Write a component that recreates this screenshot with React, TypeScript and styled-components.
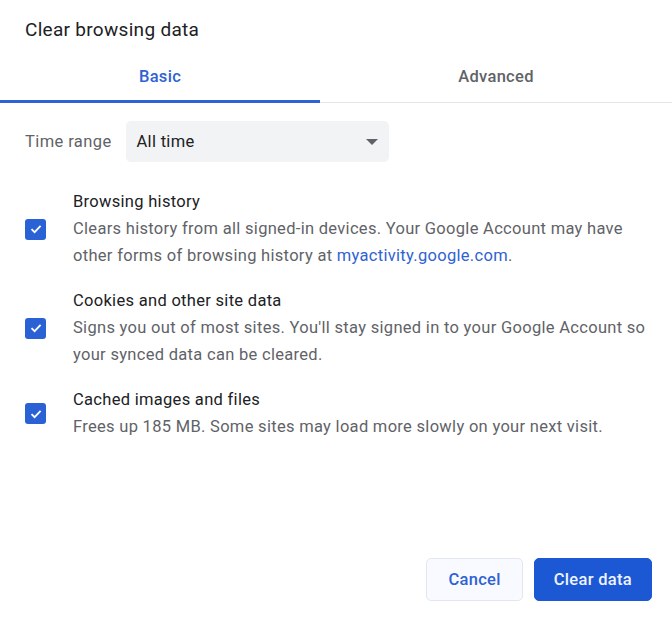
import React from 'react';
import styled, { createGlobalStyle } from 'styled-components';

const GlobalStyle = createGlobalStyle`
  html, body {
    margin: 0;
    padding: 0;
    background: #ffffff;
  }
  body {
    font-family: Roboto, "Liberation Sans", Arial, sans-serif;
    color: #202124;
  }
`;

const Dialog = styled.div`
  width: 672px;
  height: 624px;
  display: flex;
  flex-direction: column;
  background: #ffffff;
  box-sizing: border-box;
`;

const Title = styled.h1`
  margin: 0;
  padding: 17px 25px 0;
  font-size: 19px;
  font-weight: 400;
  letter-spacing: 0.3px;
  line-height: 26px;
  color: #202124;
`;

const TabBar = styled.div`
  display: flex;
  margin-top: 17px;
  border-bottom: 1px solid #e3e5e8;
`;

const Tab = styled.div<{ $active?: boolean }>`
  flex: ${p => (p.$active ? '0 0 320px' : '1')};
  height: 43px;
  display: flex;
  align-items: flex-start;
  justify-content: center;
  padding-top: 7px;
  box-sizing: border-box;
  font-size: 16.5px;
  letter-spacing: 0.3px;
  font-weight: 500;
  color: ${p => (p.$active ? '#2f62d2' : '#5f6368')};
  border-bottom: 3px solid ${p => (p.$active ? '#2f62d2' : 'transparent')};
  margin-bottom: -1px;
`;

const Body = styled.div`
  flex: 1;
  padding: 18px 25px 0;
`;

const RangeRow = styled.div`
  display: flex;
  align-items: center;
  gap: 14px;
`;

const RangeLabel = styled.span`
  font-size: 16.5px;
  letter-spacing: 0.4px;
  color: #5f6368;
`;

const Select = styled.div`
  width: 263px;
  height: 41px;
  box-sizing: border-box;
  padding: 0 11px 0 11px;
  display: flex;
  align-items: center;
  justify-content: space-between;
  background: #f1f3f4;
  border-radius: 5px;
  font-size: 16.5px;
  letter-spacing: 0.3px;
  color: #202124;
`;

const Caret = styled.span`
  width: 0;
  height: 0;
  border-left: 6px solid transparent;
  border-right: 6px solid transparent;
  border-top: 6px solid #5f6368;
`;

const Options = styled.div`
  margin-top: 27px;
  display: flex;
  flex-direction: column;
  gap: 19px;
`;

const Option = styled.div`
  display: flex;
  align-items: center;
`;

const Box = styled.div`
  flex: 0 0 auto;
  width: 21px;
  height: 21px;
  border-radius: 3px;
  background: #2a62d6;
  display: flex;
  align-items: center;
  justify-content: center;
  margin-right: 27px;
`;

const OptionText = styled.div`
  display: flex;
  flex-direction: column;
`;

const OptionTitle = styled.div`
  font-size: 16.5px;
  letter-spacing: 0.3px;
  line-height: 26px;
  color: #202124;
`;

const OptionDesc = styled.div`
  font-size: 16.5px;
  letter-spacing: 0.3px;
  line-height: 27px;
  color: #5f6368;
  max-width: 585px;
`;

const Link = styled.a`
  color: #2f62d2;
  text-decoration: none;
`;

const Footer = styled.div`
  display: flex;
  justify-content: flex-end;
  gap: 11px;
  padding: 0 20px 23px;
`;

const Button = styled.button<{ $primary?: boolean }>`
  height: 43px;
  padding: 0 ${p => (p.$primary ? '19px' : '21px')};
  border-radius: 5px;
  font-family: Roboto, "Liberation Sans", Arial, sans-serif;
  font-size: 16.5px;
  letter-spacing: 0.3px;
  font-weight: 500;
  cursor: pointer;
  border: 1px solid ${p => (p.$primary ? '#1c58d3' : '#e1e6f0')};
  background: ${p => (p.$primary ? '#1c58d3' : '#f8faff')};
  color: ${p => (p.$primary ? '#eef3ff' : '#2f62d2')};
`;

const Check = () => (
  <svg width="14" height="14" viewBox="0 0 14 14">
    <path d="M2.5 7.2 L5.6 10.2 L11.6 3.8" fill="none" stroke="#ffffff" strokeWidth="1.8" />
  </svg>
);

const items = [
  {
    title: 'Browsing history',
    desc: (
      <>
        Clears history from all signed-in devices. Your Google Account may have other forms of browsing history at{' '}
        <Link href="#">myactivity.google.com</Link>.
      </>
    ),
  },
  {
    title: 'Cookies and other site data',
    desc: <>Signs you out of most sites. You'll stay signed in to your Google Account so your synced data can be cleared.</>,
  },
  {
    title: 'Cached images and files',
    desc: <>Frees up 185 MB. Some sites may load more slowly on your next visit.</>,
  },
];

const App: React.FC = () => (
  <>
    <GlobalStyle />
    <Dialog>
      <Title>Clear browsing data</Title>
      <TabBar>
        <Tab $active>Basic</Tab>
        <Tab>Advanced</Tab>
      </TabBar>
      <Body>
        <RangeRow>
          <RangeLabel>Time range</RangeLabel>
          <Select>
            All time
            <Caret />
          </Select>
        </RangeRow>
        <Options>
          {items.map(item => (
            <Option key={item.title}>
              <Box>
                <Check />
              </Box>
              <OptionText>
                <OptionTitle>{item.title}</OptionTitle>
                <OptionDesc>{item.desc}</OptionDesc>
              </OptionText>
            </Option>
          ))}
        </Options>
      </Body>
      <Footer>
        <Button>Cancel</Button>
        <Button $primary>Clear data</Button>
      </Footer>
    </Dialog>
  </>
);

export default App;
